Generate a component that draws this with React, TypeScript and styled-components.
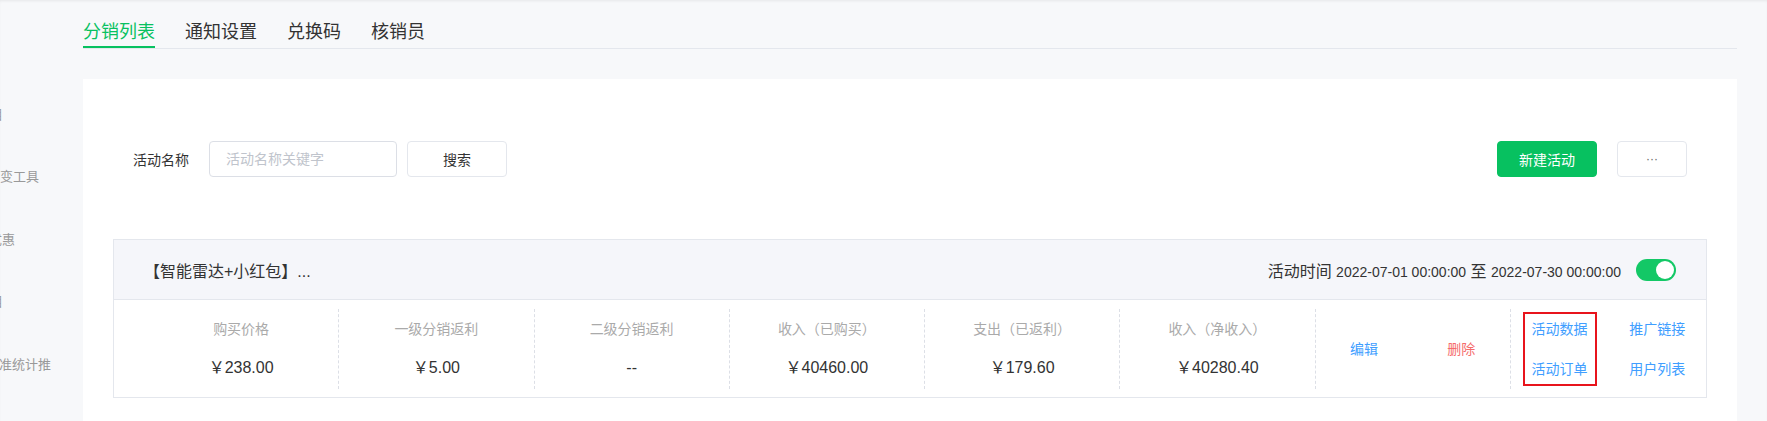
import styled, { createGlobalStyle } from 'styled-components';

const GlobalStyle = createGlobalStyle`
    * { box-sizing: border-box; }
    html, body {
        margin: 0;
        padding: 0;
        background: #f7f8fa;
    }
    body {
        font-family: "Liberation Sans", "Noto Sans CJK SC", sans-serif;
        color: #333;
    }
`;

const Page = styled.div`
    display: flex;
    min-height: 100vh;
    box-shadow: inset 0 2px 3px -1px rgba(0, 0, 0, 0.07);
`;

const Sidebar = styled.nav`
    width: 83px;
    flex-shrink: 0;
    overflow: hidden;
    padding-top: 82px;
`;

const SideItem = styled.div<{ $end: number }>`
    width: ${(p) => p.$end}px;
    height: 62.5px;
    display: flex;
    align-items: center;
    justify-content: flex-end;
    overflow: hidden;
    font-size: 13px;
    color: #999;

    span {
        flex-shrink: 0;
        white-space: nowrap;
    }
`;

const Main = styled.main`
    flex: 1;
    min-width: 0;
    display: flex;
    flex-direction: column;
    padding-right: 30px;
`;

const TabBar = styled.div`
    display: flex;
    gap: 30px;
    padding-top: 20px;
    border-bottom: 1px solid #e4e7ed;
`;

const Tab = styled.div<{ $active?: boolean }>`
    font-size: 18px;
    line-height: 24px;
    padding-bottom: 2px;
    border-bottom: 2px solid ${(p) => (p.$active ? '#07c160' : 'transparent')};
    color: ${(p) => (p.$active ? '#07c160' : '#333')};
    cursor: pointer;
`;

const Card = styled.section`
    flex: 1;
    margin-top: 30px;
    background: #fff;
    padding: 62px 30px 30px;
`;

const SearchRow = styled.div`
    display: flex;
    align-items: center;
    padding: 0 20px;
`;

const FieldLabel = styled.label`
    font-size: 14px;
    color: #333;
    margin-right: 20px;
`;

const Input = styled.input`
    width: 188px;
    height: 36px;
    padding: 0 16px;
    border: 1px solid #dcdfe6;
    border-radius: 4px;
    font: inherit;
    font-size: 14px;
    color: #333;
    outline: none;

    &::placeholder {
        color: #c0c4cc;
    }
`;

const Button = styled.button<{ $primary?: boolean; $width: number }>`
    width: ${(p) => p.$width}px;
    height: 36px;
    border-radius: 4px;
    font: inherit;
    font-size: 14px;
    cursor: pointer;
    border: 1px solid ${(p) => (p.$primary ? '#07c160' : '#e4e7ed')};
    background: ${(p) => (p.$primary ? '#07c160' : '#fff')};
    color: ${(p) => (p.$primary ? '#fff' : '#333')};
`;

const SearchButton = styled(Button)`
    margin-left: 10px;
`;

const MoreButton = styled(Button)`
    font-size: 12px;
    color: #666;
`;

const Spacer = styled.div`
    flex: 1;
`;

const ButtonGroup = styled.div`
    display: flex;
    gap: 20px;
`;

const ActivityCard = styled.div`
    margin-top: 62px;
    border: 1px solid #e4e7ed;
`;

const ActivityHeader = styled.div`
    height: 60px;
    display: flex;
    align-items: center;
    justify-content: space-between;
    padding: 0 30px;
    background: #f5f6fa;
    border-bottom: 1px solid #e4e7ed;
`;

const Title = styled.div`
    font-size: 16px;
    color: #333;
`;

const TimeInfo = styled.div`
    display: flex;
    align-items: center;
    color: #333;
`;

const TimeText = styled.span`
    font-size: 16px;
    white-space: nowrap;
`;

const TimeValue = styled.span`
    font-size: 14px;
`;

const Toggle = styled.span<{ $on?: boolean }>`
    position: relative;
    width: 40px;
    height: 22px;
    margin-left: 15px;
    border-radius: 11px;
    background: ${(p) => (p.$on ? '#13c866' : '#dcdfe6')};

    &::after {
        content: '';
        position: absolute;
        top: 2px;
        left: ${(p) => (p.$on ? '20px' : '2px')};
        width: 18px;
        height: 18px;
        border-radius: 50%;
        background: #fff;
    }
`;

const ActivityBody = styled.div`
    display: grid;
    grid-template-columns: repeat(8, 1fr);
    padding: 9px 0 8px 30px;
`;

const Column = styled.div`
    height: 80px;
    border-right: 1px dashed #dcdfe6;

    &:last-child {
        border-right: none;
    }
`;

const StatColumn = styled(Column)`
    display: flex;
    flex-direction: column;
    align-items: center;
    justify-content: center;
    gap: 18px;
`;

const StatLabel = styled.div`
    font-size: 14px;
    line-height: 20px;
    color: #aaa;
`;

const StatValue = styled.div`
    font-size: 16px;
    line-height: 22px;
    color: #333;
`;

const ActionColumn = styled(Column)`
    display: flex;
`;

const ActionCell = styled.div`
    flex: 1;
    display: flex;
    flex-direction: column;
    align-items: center;
    justify-content: center;
    gap: 20px;
`;

const HighlightBox = styled.div`
    width: 74px;
    height: 74px;
    border: 2px solid #e8141c;
    display: flex;
    flex-direction: column;
    align-items: center;
    justify-content: center;
    gap: 20px;
`;

const ActionLink = styled.a<{ $danger?: boolean }>`
    font-size: 14px;
    line-height: 20px;
    color: ${(p) => (p.$danger ? '#f56c6c' : '#409eff')};
    text-decoration: none;
    cursor: pointer;
`;

const sideItems = [
    { text: '营销项目', end: 3 },
    { text: '社群裂变工具', end: 39 },
    { text: '会员优惠', end: 15 },
    { text: '活动项目', end: 3 },
    { text: '目标准统计推', end: 51 },
];

const tabs = ['分销列表', '通知设置', '兑换码', '核销员'];

const stats = [
    { label: '购买价格', value: '￥238.00' },
    { label: '一级分销返利', value: '￥5.00' },
    { label: '二级分销返利', value: '--' },
    { label: '收入（已购买）', value: '￥40460.00' },
    { label: '支出（已返利）', value: '￥179.60' },
    { label: '收入（净收入）', value: '￥40280.40' },
];

export default function App() {
    return (
        <>
            <GlobalStyle />
            <Page>
                <Sidebar>
                    {sideItems.map((item) => (
                        <SideItem key={item.text} $end={item.end}>
                            <span>{item.text}</span>
                        </SideItem>
                    ))}
                </Sidebar>
                <Main>
                    <TabBar>
                        {tabs.map((t, i) => (
                            <Tab key={t} $active={i === 0}>
                                {t}
                            </Tab>
                        ))}
                    </TabBar>
                    <Card>
                        <SearchRow>
                            <FieldLabel>活动名称</FieldLabel>
                            <Input placeholder="活动名称关键字" />
                            <SearchButton $width={100}>搜索</SearchButton>
                            <Spacer />
                            <ButtonGroup>
                                <Button $primary $width={100}>
                                    新建活动
                                </Button>
                                <MoreButton $width={70}>···</MoreButton>
                            </ButtonGroup>
                        </SearchRow>

                        <ActivityCard>
                            <ActivityHeader>
                                <Title>【智能雷达+小红包】...</Title>
                                <TimeInfo>
                                    <TimeText>
                                        活动时间 <TimeValue>2022-07-01 00:00:00</TimeValue> 至{' '}
                                        <TimeValue>2022-07-30 00:00:00</TimeValue>
                                    </TimeText>
                                    <Toggle $on />
                                </TimeInfo>
                            </ActivityHeader>
                            <ActivityBody>
                                {stats.map((s) => (
                                    <StatColumn key={s.label}>
                                        <StatLabel>{s.label}</StatLabel>
                                        <StatValue>{s.value}</StatValue>
                                    </StatColumn>
                                ))}
                                <ActionColumn>
                                    <ActionCell>
                                        <ActionLink>编辑</ActionLink>
                                    </ActionCell>
                                    <ActionCell>
                                        <ActionLink $danger>删除</ActionLink>
                                    </ActionCell>
                                </ActionColumn>
                                <ActionColumn>
                                    <ActionCell>
                                        <HighlightBox>
                                            <ActionLink>活动数据</ActionLink>
                                            <ActionLink>活动订单</ActionLink>
                                        </HighlightBox>
                                    </ActionCell>
                                    <ActionCell>
                                        <ActionLink>推广链接</ActionLink>
                                        <ActionLink>用户列表</ActionLink>
                                    </ActionCell>
                                </ActionColumn>
                            </ActivityBody>
                        </ActivityCard>
                    </Card>
                </Main>
            </Page>
        </>
    );
}
